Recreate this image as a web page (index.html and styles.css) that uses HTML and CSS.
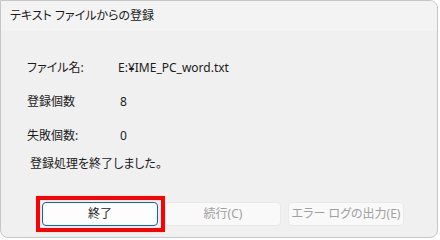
FILE: index.html
```html
<!DOCTYPE html>
<html lang="ja">
<head>
<meta charset="utf-8">
<title>テキスト ファイルからの登録</title>
<link rel="stylesheet" href="styles.css">
</head>
<body>
<div class="window">
  <div class="titlebar">テキスト ファイルからの登録</div>
  <div class="content">
    <div class="info">
      <div class="label">ファイル名:</div>
      <div class="value">E:¥IME_PC_word.txt</div>
      <div class="label">登録個数</div>
      <div class="value num">8</div>
      <div class="label">失敗個数:</div>
      <div class="value num">0</div>
    </div>
    <div class="message">登録処理を終了しました。</div>
    <div class="buttons">
      <div class="btn-wrap">
        <button class="btn primary">終了</button>
        <span class="highlight"></span>
      </div>
      <button class="btn disabled">続行(C)</button>
      <button class="btn disabled">エラー ログの出力(E)</button>
    </div>
  </div>
</div>
</body>
</html>
```
FILE: styles.css
```css
* { box-sizing: border-box; }
html, body { margin: 0; padding: 0; background: #ffffff; }
body {
  font-family: "Noto Sans", "Noto Sans CJK JP", sans-serif;
  font-size: 12px;
  color: #1b1b1b;
  font-feature-settings: "palt";
}
.window {
  width: 438px;
  height: 238px;
  border: 1px solid #c6c6c6;
  border-radius: 0 8px 8px 8px;
  background: #f0f0f0;
  overflow: hidden;
  display: flex;
  flex-direction: column;
}
.titlebar {
  height: 30px;
  line-height: 30px;
  padding-left: 9px;
  background: #f3f3f3;
  color: #1a1a1a;
  font-size: 12px;
}
.content {
  padding-top: 29px;
  display: flex;
  flex-direction: column;
}
.info {
  display: grid;
  grid-template-columns: 91px auto;
  row-gap: 18px;
  padding-left: 26px;
  line-height: 16px;
}
.value.num { padding-left: 2px; }
.message {
  margin-top: 12px;
  padding-left: 29px;
  line-height: 16px;
}
.buttons {
  margin-top: 30px;
  padding-left: 41px;
  display: flex;
  gap: 7px;
}
.btn-wrap { position: relative; display: flex; }
.btn {
  width: 116px;
  height: 24px;
  border-radius: 4px;
  font-family: "Noto Sans", "Noto Sans CJK JP", sans-serif;
  font-size: 12px;
  font-feature-settings: "palt";
  padding: 0;
  line-height: 22px;
}
.primary {
  background: #fdfdfd;
  border: 1px solid #0067c0;
  color: #1b1b1b;
}
.disabled {
  background: #f9f9f9;
  border: 1px solid #e9e9e9;
  color: #a0a0a0;
}
.highlight {
  position: absolute;
  left: -6px;
  top: -6px;
  right: -7px;
  bottom: -6px;
  border: 4px solid #ff0000;
  pointer-events: none;
}
```
